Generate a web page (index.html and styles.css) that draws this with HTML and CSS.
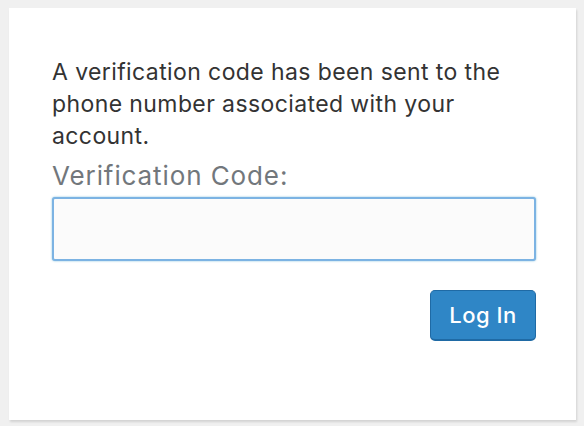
FILE: index.html
```html
<!DOCTYPE html>
<html>
<head>
<meta charset="utf-8">
<link rel="stylesheet" href="styles.css">
</head>
<body>
<div class="page">
  <form class="card">
    <p class="message">A verification code has been sent to the phone number associated with your account.</p>
    <label class="label" for="code">Verification Code:</label>
    <input class="input" id="code" type="text">
    <div class="actions">
      <button class="button" type="button">Log In</button>
    </div>
  </form>
</div>
</body>
</html>
```

FILE: styles.css
```css
html, body {
  margin: 0;
  padding: 0;
  background: #f0f0f0;
}
body {
  font-family: Inter, "Liberation Sans", Arial, sans-serif;
}
.page {
  width: 584px;
  height: 426px;
  box-sizing: border-box;
  padding: 8px 8px 6px 9px;
  display: flex;
}
.card {
  flex: 1;
  background: #fff;
  box-shadow: 1px 2px 2px rgba(0,0,0,0.12);
  padding: 48px 40px 0 43px;
  display: flex;
  flex-direction: column;
  margin: 0;
}
.message {
  margin: 0;
  font-size: 23px;
  letter-spacing: 0.4px;
  line-height: 32px;
  color: #333;
}
.label {
  margin-top: 8px;
  font-size: 26px;
  letter-spacing: 0.9px;
  line-height: 32px;
  color: #72777c;
}
.input {
  margin-top: 5px;
  height: 64px;
  box-sizing: border-box;
  border: 2px solid #7cb3e3;
  border-radius: 3px;
  background: #fbfbfb;
  box-shadow: 0 0 2px rgba(30,140,190,0.6);
  font-size: 24px;
  outline: none;
}
.actions {
  display: flex;
  justify-content: flex-end;
  margin-top: 29px;
}
.button {
  width: 106px;
  height: 51px;
  box-sizing: border-box;
  background: #2f86c6;
  border: 1px solid #1f6aa5;
  border-bottom-width: 2px;
  border-radius: 5px;
  color: #fff;
  font-family: Inter, "Liberation Sans", Arial, sans-serif;
  font-size: 22px;
  font-weight: 500;
  letter-spacing: 0.5px;
  padding: 0;
}
```
